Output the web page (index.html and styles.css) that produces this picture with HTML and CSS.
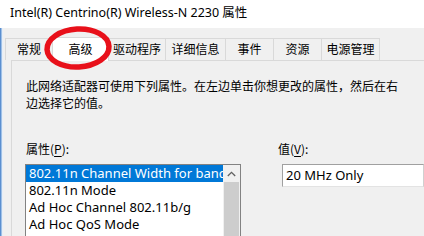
FILE: index.html
```html
<!DOCTYPE html>
<html>
<head>
<meta charset="utf-8">
<link rel="stylesheet" href="styles.css">
</head>
<body>
<div class="title">Intel(R) Centrino(R) Wireless-N 2230 属性</div>
<div class="main">
  <div class="edge"></div>
  <div class="dialog">
    <div class="tabs">
      <div class="tab t1">常规</div>
      <div class="tab t2 active">高级</div>
      <div class="tab t3">驱动程序</div>
      <div class="tab t4">详细信息</div>
      <div class="tab t5">事件</div>
      <div class="tab t6">资源</div>
      <div class="tab t7">电源管理</div>
    </div>
    <div class="page">
      <p class="desc">此网络适配器可使用下列属性。在左边单击你想更改的属性，然后在右边选择它的值。</p>
      <div class="fields">
        <div class="col-prop">
          <div class="label">属性(<u>P</u>):</div>
          <div class="listbox">
            <div class="items">
              <div class="item selected">802.11n Channel Width for band 2.4</div>
              <div class="item">802.11n Mode</div>
              <div class="item">Ad Hoc Channel 802.11b/g</div>
              <div class="item">Ad Hoc QoS Mode</div>
            </div>
            <div class="scrollbar">
              <div class="sb-up">
                <svg width="9" height="6" viewBox="0 0 9 6"><path d="M0.8 5 L4.5 1.3 L8.2 5" fill="none" stroke="#606060" stroke-width="1.3"/></svg>
              </div>
              <div class="sb-thumb"></div>
            </div>
          </div>
        </div>
        <div class="col-val">
          <div class="label">值(<u>V</u>):</div>
          <div class="edit">20 MHz Only</div>
        </div>
      </div>
    </div>
  </div>
</div>
<svg class="circle" width="80" height="52" viewBox="0 0 80 52">
  <ellipse cx="38" cy="24" rx="31" ry="19" fill="none" stroke="#e8101a" stroke-width="5.5" transform="rotate(-3 38 24)"/>
</svg>
</body>
</html>
```

FILE: styles.css
```css
* { box-sizing: border-box; }
html, body {
  margin: 0;
  padding: 0;
}
body {
  position: relative;
  width: 424px;
  height: 236px;
  overflow: hidden;
  background: #f0f0f0;
  font-family: "Noto Sans", "Noto Sans CJK SC", sans-serif;
  font-size: 12px;
  color: #000;
}
.title {
  height: 28px;
  background: #ffffff;
  padding: 4px 0 0 10px;
  font-size: 12.5px;
  line-height: 18px;
  white-space: nowrap;
}
.main {
  display: flex;
  height: 208px;
  overflow: hidden;
}
.edge {
  width: 3px;
  flex: none;
  background: linear-gradient(to right, #5b8fd0 0, #5b8fd0 1px, #9fc0e6 1px, #9fc0e6 2px, #e6eef8 2px);
}
.dialog {
  flex: 1;
  padding: 10px 0 0 2px;
  min-width: 0;
}
.tabs {
  display: flex;
  height: 22px;
  align-items: flex-end;
  position: relative;
  z-index: 2;
}
.tab {
  height: 22px;
  border: 1px solid #d9d9d9;
  border-bottom: none;
  margin-left: -1px;
  background: #f0f0f0;
  text-align: center;
  line-height: 20px;
  font-family: "Noto Sans CJK SC", sans-serif;
  font-size: 12px;
  white-space: nowrap;
}
.t1 { width: 48px; margin-left: 0; }
.t2 { width: 57px; }
.t3 { width: 58px; }
.t4 { width: 61px; }
.t5 { width: 49px; }
.t6 { width: 49px; }
.t7 { width: 59px; }
.tab.active {
  background: #ffffff;
  height: 24px;
  margin-bottom: -1px;
  line-height: 21px;
}
.page {
  border: 1px solid #d9d9d9;
  border-right: none;
  border-bottom: none;
  margin-left: 6px;
  height: 176px;
  padding: 16px 0 0 14px;
}
.desc {
  margin: 0;
  width: 380px;
  line-height: 17px;
  font-family: "Noto Sans CJK SC", sans-serif;
  font-size: 12px;
}
.fields {
  display: flex;
  margin-top: 29px;
}
.col-prop {
  width: 216px;
  margin-left: -1px;
}
.label {
  height: 17px;
  line-height: 17px;
  padding-left: 1px;
  font-family: "Noto Sans CJK SC", sans-serif;
  font-size: 12px;
  margin-bottom: 7px;
}
.label u { text-decoration-thickness: 1px; text-underline-offset: 2px; }
.listbox {
  display: flex;
  height: 72px;
  border: 1px solid #828282;
  border-bottom: none;
  background: #ffffff;
}
.items {
  flex: 1;
  min-width: 0;
  overflow: hidden;
}
.item {
  height: 17px;
  line-height: 17px;
  padding-left: 3px;
  font-size: 13px;
  white-space: nowrap;
  overflow: hidden;
}
.item.selected {
  background: #0078d7;
  color: #ffffff;
}
.scrollbar {
  width: 17px;
  flex: none;
  background: #f0f0f0;
  display: flex;
  flex-direction: column;
}
.sb-up {
  height: 17px;
  display: flex;
  align-items: center;
  justify-content: center;
}
.sb-thumb {
  flex: 1;
  margin: 0 1px;
  background: #cdcdcd;
}
.col-val {
  margin-left: 36px;
  flex: 1;
}
.edit {
  margin-left: 5px;
  width: 142px;
  height: 23px;
  border: 1px solid #a0a0a0;
  border-right-color: #d0d0d0;
  border-bottom-color: #e3e3e3;
  background: #ffffff;
  padding-left: 3px;
  line-height: 21px;
  font-size: 13px;
  white-space: nowrap;
}
.circle {
  position: absolute;
  left: 40px;
  top: 24px;
  z-index: 5;
}
```
